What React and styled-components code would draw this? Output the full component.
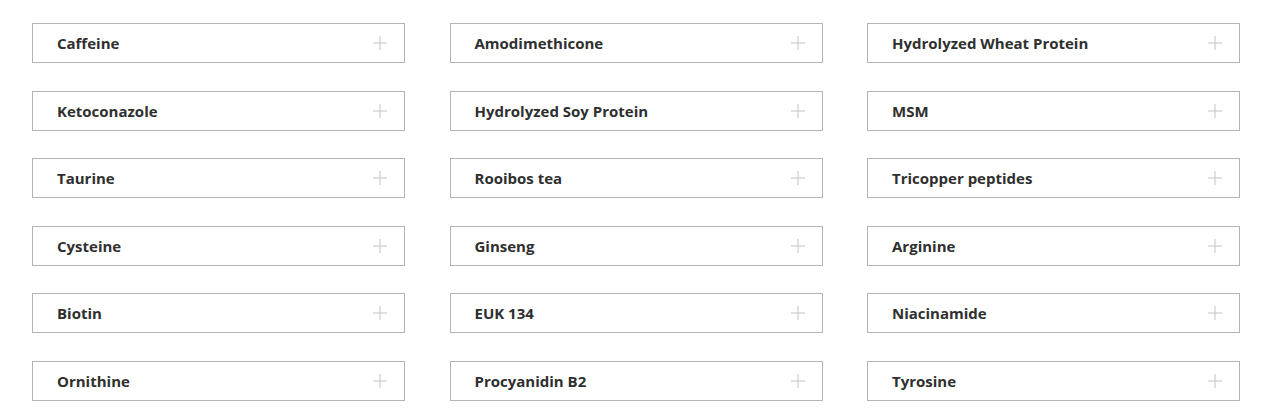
import React from "react";
import styled, { createGlobalStyle } from "styled-components";

const items = [
  "Caffeine",
  "Amodimethicone",
  "Hydrolyzed Wheat Protein",
  "Ketoconazole",
  "Hydrolyzed Soy Protein",
  "MSM",
  "Taurine",
  "Rooibos tea",
  "Tricopper peptides",
  "Cysteine",
  "Ginseng",
  "Arginine",
  "Biotin",
  "EUK 134",
  "Niacinamide",
  "Ornithine",
  "Procyanidin B2",
  "Tyrosine",
];

const Global = createGlobalStyle`
  body {
    margin: 0;
    background: #fff;
    font-family: "Open Sans", "Liberation Sans", sans-serif;
  }
`;

const Grid = styled.div`
  display: grid;
  grid-template-columns: repeat(3, 373px);
  column-gap: 44.5px;
  row-gap: 27.5px;
  padding: 23px 0 0 32px;
`;

const Item = styled.div`
  box-sizing: border-box;
  height: 40px;
  border: 1px solid #b4b4b4;
  display: flex;
  align-items: center;
  justify-content: space-between;
  padding: 0 17px 0 24px;
  cursor: pointer;
`;

const Label = styled.span`
  font-size: 15px;
  font-weight: 700;
  color: #2f2f2f;
  letter-spacing: 0;
`;

const Plus = () => (
  <svg width="14" height="14" viewBox="0 0 14 14">
    <path d="M7 0v14M0 7h14" stroke="#c4c4c4" strokeWidth="1" />
  </svg>
);

const App = () => (
  <>
    <Global />
    <Grid>
      {items.map((name) => (
        <Item key={name}>
          <Label>{name}</Label>
          <Plus />
        </Item>
      ))}
    </Grid>
  </>
);

export default App;
